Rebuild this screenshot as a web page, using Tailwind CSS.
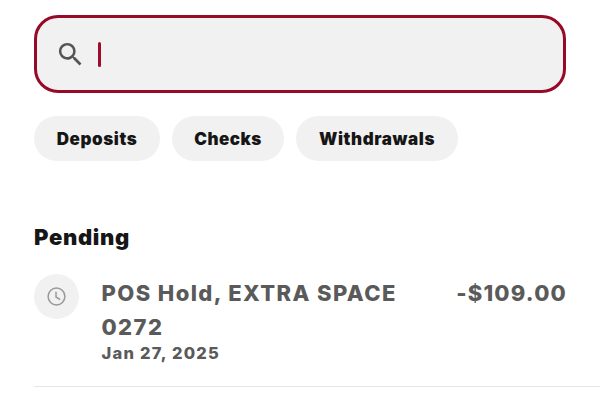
<!DOCTYPE html>
<html lang="en">

<head>
  <meta charset="UTF-8" />
  <meta name="viewport" content="width=device-width, initial-scale=1" />
  <title>Transactions</title>
  <script src="https://cdn.jsdelivr.net/npm/@tailwindcss/browser@4"></script>
</head>

<body class="bg-white h-[402px] overflow-hidden pt-[15px] pl-[34px] font-['Inter',sans-serif]">

  <!-- Search -->
  <div class="w-[532px] h-[78px] flex items-center pl-[18px] bg-[#f1f1f1] border-3 border-[#970a27] rounded-[24px]">
    <svg class="w-[31px] h-[31px]" viewBox="0 0 24 24" fill="#555">
      <path d="M15.5 14h-.79l-.28-.27A6.471 6.471 0 0 0 16 9.5 6.5 6.5 0 1 0 9.5 16c1.61 0 3.09-.59 4.23-1.57l.27.28v.79l5 4.99L20.49 19l-4.99-5zm-6 0C7.01 14 5 11.99 5 9.5S7.01 5 9.5 5 14 7.01 14 9.5 11.99 14 9.5 14z" />
    </svg>
    <span class="ml-[12px] w-[3px] h-[25px] rounded-full bg-[#a00a2b]"></span>
  </div>

  <!-- Filters -->
  <div class="mt-[23px] flex gap-[12px] text-[17px] font-black text-[#161616]">
    <button class="w-[126px] h-[45px] pt-[2px] rounded-full bg-[#f1f1f1] tracking-[0.6px]">Deposits</button>
    <button class="w-[112px] h-[45px] pt-[2px] rounded-full bg-[#f1f1f1] tracking-[0.5px]">Checks</button>
    <button class="w-[162px] h-[45px] pt-[2px] rounded-full bg-[#f1f1f1] tracking-[0.6px]">Withdrawals</button>
  </div>

  <!-- Pending transactions -->
  <h2 class="mt-[61px] text-[22px] leading-[30px] font-black tracking-[0.7px] text-[#161616]">Pending</h2>
  <div class="mt-[22px] h-[113px] flex items-start border-b border-[#e6e6e6] text-[#5a5a5a]">
    <div class="w-[45px] h-[45px] shrink-0 flex items-center justify-center rounded-full bg-[#f1f1f1]">
      <svg class="w-[20px] h-[20px]" viewBox="0 0 20 20" fill="none" stroke="#999" stroke-width="1.5">
        <circle cx="9.5" cy="9.5" r="8.4" />
        <path d="M9 4.8v5.2l4.2 2.6" />
      </svg>
    </div>
    <div class="ml-[22.5px] mt-[2px] w-[330px]">
      <p class="text-[22px] leading-[34px] font-extrabold tracking-[1.4px]">POS Hold, EXTRA SPACE 0272</p>
      <p class="-mt-px text-[16.5px] leading-[20px] font-extrabold tracking-[1.25px]">Jan 27, 2025</p>
    </div>
    <p class="ml-auto mr-[33px] mt-[2px] text-[22px] leading-[34px] font-extrabold tracking-[1.2px]">-$109.00</p>
  </div>

</body>

</html>
